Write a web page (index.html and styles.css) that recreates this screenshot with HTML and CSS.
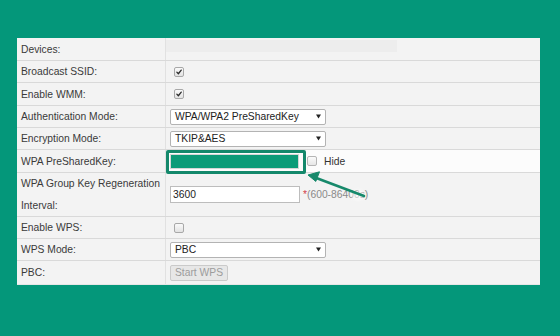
FILE: index.html
```html
<!DOCTYPE html>
<html>
<head>
<meta charset="utf-8">
<link rel="stylesheet" href="styles.css">
</head>
<body>
<div class="panel">
  <div class="row h23">
    <div class="label">Devices:</div>
    <div class="value"><span class="band"></span></div>
  </div>
  <div class="row h22">
    <div class="label">Broadcast SSID:</div>
    <div class="value"><span class="cb"><svg viewBox="0 0 10 10"><path d="M2.3 5.2 L4.2 7.2 L7.8 2.6" /></svg></span></div>
  </div>
  <div class="row h23">
    <div class="label">Enable WMM:</div>
    <div class="value"><span class="cb"><svg viewBox="0 0 10 10"><path d="M2.3 5.2 L4.2 7.2 L7.8 2.6" /></svg></span></div>
  </div>
  <div class="row h22">
    <div class="label">Authentication Mode:</div>
    <div class="value"><div class="select"><span>WPA/WPA2 PreSharedKey</span><svg class="caret" viewBox="0 0 6 5"><path d="M0 0H6L3 5Z"/></svg></div></div>
  </div>
  <div class="row h22">
    <div class="label">Encryption Mode:</div>
    <div class="value"><div class="select"><span>TKIP&amp;AES</span><svg class="caret" viewBox="0 0 6 5"><path d="M0 0H6L3 5Z"/></svg></div></div>
  </div>
  <div class="row h23">
    <div class="label">WPA PreSharedKey:</div>
    <div class="value white"><span class="pw"></span><span class="cb hide-cb"></span><span class="hide-text">Hide</span></div>
  </div>
  <div class="row h44">
    <div class="label wrap">WPA Group Key Regeneration Interval:</div>
    <div class="value"><span class="text-input">3600</span><span class="hint"><span class="star">*</span>(600-86400s)</span></div>
  </div>
  <div class="row h22">
    <div class="label">Enable WPS:</div>
    <div class="value"><span class="cb"></span></div>
  </div>
  <div class="row h22">
    <div class="label">WPS Mode:</div>
    <div class="value"><div class="select"><span>PBC</span><svg class="caret" viewBox="0 0 6 5"><path d="M0 0H6L3 5Z"/></svg></div></div>
  </div>
  <div class="row h24 last">
    <div class="label">PBC:</div>
    <div class="value"><span class="button">Start WPS</span></div>
  </div>

  <div class="highlight"></div>
  <svg class="arrow" viewBox="0 0 523 247">
    <defs>
      <filter id="soft" x="-50%" y="-50%" width="200%" height="200%"><feGaussianBlur stdDeviation="1.8"/></filter>
    </defs>
    <ellipse cx="341" cy="157" rx="7" ry="5" fill="#ffffff" opacity="0.6" filter="url(#soft)"/>
    <line x1="347" y1="158" x2="298" y2="139.5" stroke="#17896b" stroke-width="2.6" stroke-linecap="round"/>
    <path d="M291 137 L302.5 133.8 L298.8 143.4 Z" fill="#17896b" stroke="#17896b" stroke-width="1" stroke-linejoin="round"/>
  </svg>
</div>
</body>
</html>
```

FILE: styles.css
```css
html, body {
  margin: 0;
  padding: 0;
}

body {
  background: #04977a;
  width: 560px;
  height: 336px;
  box-sizing: border-box;
  padding: 38px 20px 0 17px;
  font-family: "Liberation Sans", Arial, sans-serif;
  font-size: 10.3px;
  color: #333;
}

.panel {
  position: relative;
  width: 523px;
  background: #f3f3f3;
}

.row {
  display: flex;
  box-sizing: border-box;
  border-bottom: 1px solid #d9d9d9;
}

.row.last {
  border-bottom: 1px solid #e6e6e6;
}

.h22 { height: 22px; }
.h23 { height: 23px; }
.h24 { height: 24px; }
.h44 { height: 44px; }

.label {
  width: 149px;
  flex: none;
  box-sizing: border-box;
  padding-left: 4px;
  border-right: 1px solid #e1e1e1;
  display: flex;
  align-items: center;
  color: #3a3a3a;
  white-space: nowrap;
}

.label.wrap {
  white-space: normal;
  line-height: 22px;
  padding-right: 2px;
}

.value {
  flex: 1;
  display: flex;
  align-items: center;
  padding-left: 4px;
}

.value.white {
  background: #fcfcfc;
}

.band {
  align-self: flex-start;
  margin: 2px 0 0 -4px;
  width: 231px;
  height: 12px;
  background: #ededed;
}

.cb {
  display: inline-block;
  width: 10px;
  height: 10px;
  box-sizing: border-box;
  margin-left: 4px;
  border: 1px solid #a8a8a8;
  border-radius: 2px;
  background: linear-gradient(#fafafa, #e2e2e2);
}

.cb svg {
  display: block;
  width: 8px;
  height: 8px;
}

.cb svg path {
  fill: none;
  stroke: #2b2b2b;
  stroke-width: 1.6;
  stroke-linecap: round;
  stroke-linejoin: round;
}

.select {
  width: 156px;
  height: 16px;
  box-sizing: border-box;
  border: 1px solid #b3b3b3;
  border-radius: 2px;
  background: #fff;
  display: flex;
  align-items: center;
  justify-content: space-between;
  padding: 0 4px 0 4px;
  color: #222;
}

.caret {
  width: 5px;
  height: 5px;
  fill: #222;
}

.pw {
  display: inline-block;
  width: 129px;
  height: 15px;
  box-sizing: border-box;
  border: 1px solid #d6d6d6;
  background: #0c9b78;
}

.hide-cb {
  margin-left: 8px;
  background: linear-gradient(#fafafa, #e6e6e6);
  border-color: #b5b5b5;
}

.hide-text {
  margin-left: 7px;
  color: #333;
}

.text-input {
  display: inline-flex;
  align-items: center;
  width: 130px;
  height: 17px;
  box-sizing: border-box;
  border: 1px solid #bdbdbd;
  background: #fff;
  padding-left: 2px;
  color: #222;
}

.hint {
  margin-left: 3px;
  color: #8a8a8a;
}

.star {
  color: #d4424a;
}

.button {
  display: inline-flex;
  align-items: center;
  justify-content: center;
  width: 58px;
  height: 16px;
  box-sizing: border-box;
  border: 1px solid #cacaca;
  border-radius: 2px;
  background: #e7e7e7;
  color: #9c9c9c;
}

.highlight {
  position: absolute;
  left: 149px;
  top: 112px;
  width: 140px;
  height: 24px;
  box-sizing: border-box;
  border: 3px solid #14886b;
  border-radius: 2px;
}

.arrow {
  position: absolute;
  left: 0;
  top: 0;
  width: 523px;
  height: 247px;
  pointer-events: none;
}
```
